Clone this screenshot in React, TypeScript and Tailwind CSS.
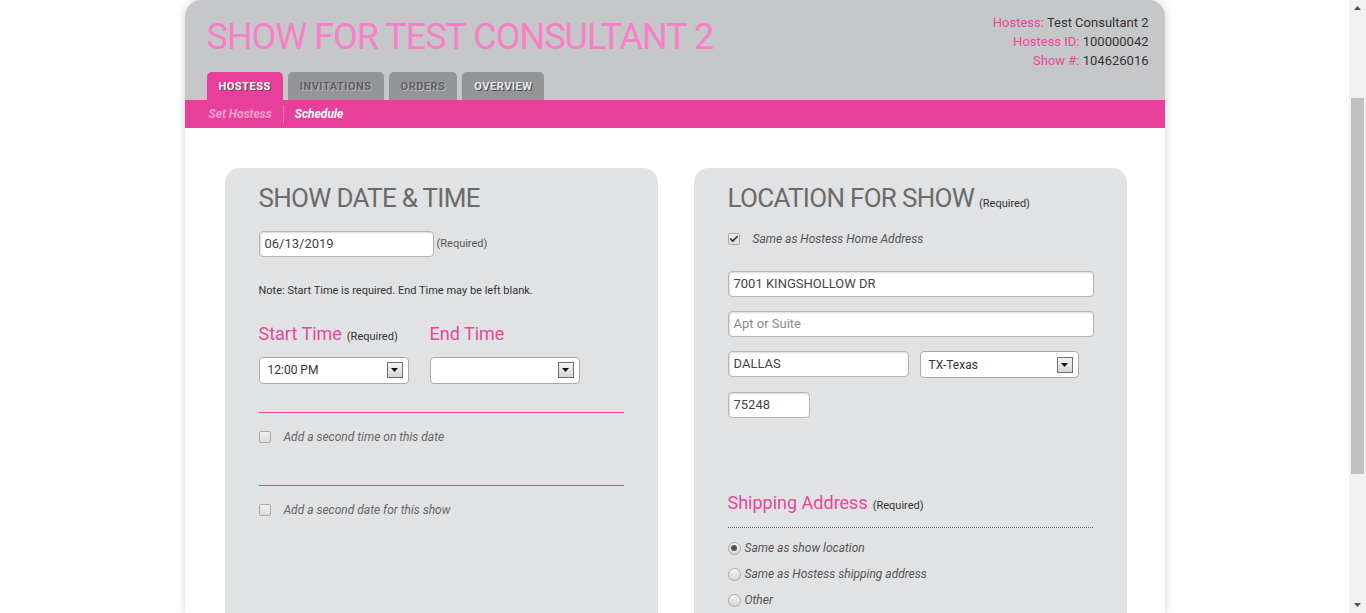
import { Check } from "lucide-react";

const pink = "text-[#e8489b]";

function SelectBox({ value, width }: { value?: string; width: string }) {
  return (
    <div
      className={`${width} h-[27px] shrink-0 flex items-center justify-between rounded-[4px] border border-[#a9a9a9] bg-white pl-[8px] pr-[5px] text-[12px] text-[#333]`}
    >
      <span>{value}</span>
      <span className="w-[16px] h-[16px] border border-[#6e6e6e] bg-gradient-to-b from-[#f4f4f4] to-[#d6d6d6] flex items-center justify-center">
        <svg width="7" height="4" viewBox="0 0 7 4">
          <path d="M0 0h7L3.5 4z" fill="#111" />
        </svg>
      </span>
    </div>
  );
}

function TextBox({ value, placeholder, width }: { value?: string; placeholder?: string; width: string }) {
  return (
    <div
      className={`${width} h-[26px] shrink-0 flex items-center rounded-[4px] border border-[#b5b5b5] bg-white px-[5px] text-[13px] shadow-[inset_1px_1px_2px_rgba(0,0,0,0.15)]`}
    >
      {value ? <span className="text-[#444]">{value}</span> : <span className="text-[#8a8a8a]">{placeholder}</span>}
    </div>
  );
}

function CheckBox({ checked }: { checked?: boolean }) {
  return (
    <span className="w-[12px] h-[12px] rounded-[2px] border border-[#a8a8a8] bg-gradient-to-b from-[#f0f0f0] to-[#dcdcdc] flex items-center justify-center">
      {checked && <Check size={10} strokeWidth={4} className="text-[#333]" />}
    </span>
  );
}

function Radio({ checked }: { checked?: boolean }) {
  return (
    <span className="w-[13px] h-[13px] rounded-full border border-[#a8a8a8] bg-gradient-to-b from-[#f4f4f4] to-[#d8d8d8] flex items-center justify-center">
      {checked && <span className="w-[6px] h-[6px] rounded-full bg-[#555]" />}
    </span>
  );
}

function Tab({ label, active, light }: { label: string; active?: boolean; light?: boolean }) {
  const cls = active
    ? "bg-[#e8409a] text-[#f3f3f3] [text-shadow:1px_1px_0_#555]"
    : light
    ? "bg-[#939598] text-[#e9e9e9] [text-shadow:1px_1px_0_#444]"
    : "bg-[#939598] text-[#5e5f61] [text-shadow:1px_1px_0_#bdbdbd]";
  return (
    <div className={`h-[28px] px-[12px] pt-[7px] rounded-t-[5px] text-[11px] font-bold tracking-[0.5px] ${cls}`}>
      {label}
    </div>
  );
}

export default function App() {
  return (
    <div className="flex w-[1366px] h-[613px] overflow-hidden bg-white font-['Roboto',sans-serif]">
      <main className="flex-1 flex justify-center">
        <div className="w-[980px] flex flex-col shadow-[0_0_10px_rgba(0,0,0,0.18)] rounded-t-[16px]">
          <header className="shrink-0 h-[100px] bg-[#c6c7c9] rounded-t-[16px] pl-[22px] pr-[16px] flex justify-between">
            <div className="flex flex-col">
              <h1 className="text-[36px] leading-none pt-[19px] text-[#f87fc8] tracking-[-1px]">
                SHOW FOR TEST CONSULTANT 2
              </h1>
              <nav className="flex gap-[5px] mt-auto">
                <Tab label="HOSTESS" active />
                <Tab label="INVITATIONS" />
                <Tab label="ORDERS" />
                <Tab label="OVERVIEW" light />
              </nav>
            </div>
            <div className="pt-[13px] text-right text-[13px] leading-[19px] text-[#333]">
              <div>
                <span className={pink}>Hostess:</span> Test Consultant 2
              </div>
              <div>
                <span className={pink}>Hostess ID:</span> 100000042
              </div>
              <div>
                <span className={pink}>Show #:</span> 104626016
              </div>
            </div>
          </header>
          <div className="shrink-0 h-[28px] bg-[#e8409a] flex items-center pl-[24px] text-[12px] font-bold italic">
            <span className="text-[#f9a2d1]">Set Hostess</span>
            <span className="w-px h-[18px] bg-[#f27fbd] mx-[11px]" />
            <span className="text-white">Schedule</span>
          </div>
          <div className="flex-1 bg-white flex gap-[36px] pl-[40px] pt-[40px]">
            <section className="w-[433px] bg-[#e1e2e4] rounded-t-[15px] pl-[34px] pt-[17px]">
              <h2 className="text-[26px] leading-none text-[#6b6b6b] tracking-[-0.7px]">SHOW DATE &amp; TIME</h2>
              <div className="flex items-center gap-[3px] mt-[20px]">
                <TextBox value="06/13/2019" width="w-[175px]" />
                <span className="text-[11px] text-[#555]">(Required)</span>
              </div>
              <p className="mt-[26px] text-[11px] text-[#333]">Note: Start Time is required. End Time may be left blank.</p>
              <div className="flex gap-[21px] mt-[20px]">
                <div>
                  <div className="flex items-baseline gap-[5px]">
                    <span className={`text-[18px] ${pink}`}>Start Time</span>
                    <span className="text-[11px] text-[#333]">(Required)</span>
                  </div>
                  <div className="mt-[10px]">
                    <SelectBox value="12:00 PM" width="w-[150px]" />
                  </div>
                </div>
                <div>
                  <span className={`text-[18px] ${pink}`}>End Time</span>
                  <div className="mt-[10px]">
                    <SelectBox width="w-[150px]" />
                  </div>
                </div>
              </div>
              <div className="w-[365px] h-px bg-[#e83fb0] mt-[28px]" />
              <label className="flex items-center gap-[13px] mt-[15px] text-[12px] italic text-[#666]">
                <CheckBox />
                Add a second time on this date
              </label>
              <div className="w-[365px] h-px bg-[#d04aa0] mt-[39px]" />
              <label className="flex items-center gap-[13px] mt-[15px] text-[12px] italic text-[#666]">
                <CheckBox />
                Add a second date for this show
              </label>
            </section>
            <section className="w-[433px] bg-[#e1e2e4] rounded-t-[15px] pl-[34px] pt-[17px]">
              <h2 className="flex items-baseline gap-[5px] leading-none text-[#6b6b6b]">
                <span className="text-[26px] tracking-[-0.7px]">LOCATION FOR SHOW</span>
                <span className="text-[11px] text-[#333]">(Required)</span>
              </h2>
              <label className="flex items-center gap-[13px] mt-[19px] text-[12px] italic text-[#555]">
                <CheckBox checked />
                Same as Hostess Home Address
              </label>
              <div className="flex flex-col gap-[14px] mt-[23px]">
                <TextBox value="7001 KINGSHOLLOW DR" width="w-[366px]" />
                <TextBox placeholder="Apt or Suite" width="w-[366px]" />
                <div className="flex gap-[11px]">
                  <TextBox value="DALLAS" width="w-[181px]" />
                  <SelectBox value="TX-Texas" width="w-[159px]" />
                </div>
                <TextBox value="75248" width="w-[82px]" />
              </div>
              <div className="flex items-baseline gap-[5px] mt-[71px]">
                <span className={`text-[18px] ${pink}`}>Shipping Address</span>
                <span className="text-[11px] text-[#333]">(Required)</span>
              </div>
              <div className="w-[365px] border-t border-dotted border-[#666] mt-[11px]" />
              <div className="flex flex-col gap-[8px] mt-[11px] text-[12px] italic text-[#555]">
                <label className="flex items-center gap-[4px]">
                  <Radio checked />
                  Same as show location
                </label>
                <label className="flex items-center gap-[4px]">
                  <Radio />
                  Same as Hostess shipping address
                </label>
                <label className="flex items-center gap-[4px]">
                  <Radio />
                  Other
                </label>
              </div>
            </section>
          </div>
        </div>
      </main>
      <aside className="w-[17px] bg-[#f1f1f1] flex flex-col items-center justify-between py-[6px]">
        <svg width="7" height="4" viewBox="0 0 7 4">
          <path d="M0 4h7L3.5 0z" fill="#505050" />
        </svg>
        <div className="w-[13px] h-[376px] bg-[#c1c1c1] mt-[88px] mb-auto" />
        <svg width="7" height="4" viewBox="0 0 7 4">
          <path d="M0 0h7L3.5 4z" fill="#505050" />
        </svg>
      </aside>
    </div>
  );
}
